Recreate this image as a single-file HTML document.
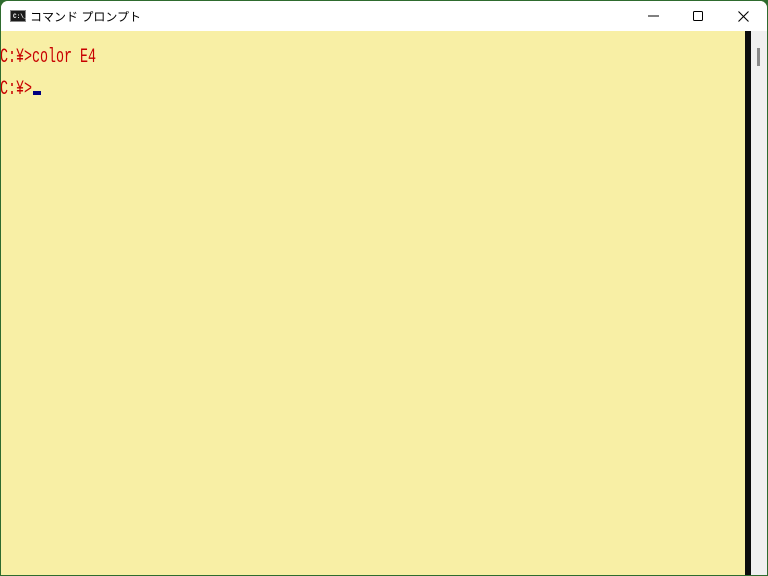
<!DOCTYPE html>
<html><head><meta charset="utf-8"><style>
html,body{margin:0;padding:0;width:768px;height:576px;overflow:hidden;background:#2e6b2e;}
#win{position:absolute;left:1px;top:1px;width:766px;height:574px;background:#f8efa5;border-radius:7px 7px 0 0;overflow:hidden;}
#title{position:absolute;left:0;top:0;width:766px;height:30px;background:#fff;}
#ico{position:absolute;left:9px;top:9px;width:16px;height:12px;background:#1a1a1a;border:1px solid #888;box-sizing:border-box;}
#ico span{position:absolute;left:2px;top:3px;font:bold 6px "Liberation Mono",monospace;color:#fff;line-height:6px;}
#tt{position:absolute;left:29px;top:7px;font:12px "Liberation Sans","Noto Sans CJK JP",sans-serif;color:#000;}
.line{position:absolute;left:-1px;font:20px "Liberation Mono",monospace;color:#c80000;transform:scaleX(0.667);transform-origin:0 0;white-space:pre;line-height:20px;}
#cur{position:absolute;left:32px;top:90px;width:8px;height:4px;background:#000080;}
#blk{position:absolute;left:744px;top:30px;width:6px;height:544px;background:#0c0c0c;}
#sb{position:absolute;left:750px;top:30px;width:16px;height:544px;background:#f0f0f0;}
</style></head><body>
<div id="win">
<div id="title">
<div id="ico"><span>C:\_</span></div>
<div id="tt">コマンド プロンプト</div>
<svg style="position:absolute;left:630px;top:0" width="136" height="30">
<line x1="17" y1="15" x2="28" y2="15" stroke="#000" stroke-width="1"/>
<rect x="62.5" y="10.5" width="9" height="9" rx="1" fill="none" stroke="#000" stroke-width="1"/>
<path d="M107.5 10.5 L117.5 20.5 M117.5 10.5 L107.5 20.5" stroke="#000" stroke-width="1.1"/>
</svg>
</div>
<div class="line" style="top:47px">C:¥&gt;color E4</div>
<div class="line" style="top:79px">C:¥&gt;</div>
<div id="cur"></div>
<div id="blk"></div>
<div id="sb"><div style="position:absolute;left:6px;top:17px;width:3px;height:18px;background:#8a8a8a"></div></div>
</div>
</body></html>
